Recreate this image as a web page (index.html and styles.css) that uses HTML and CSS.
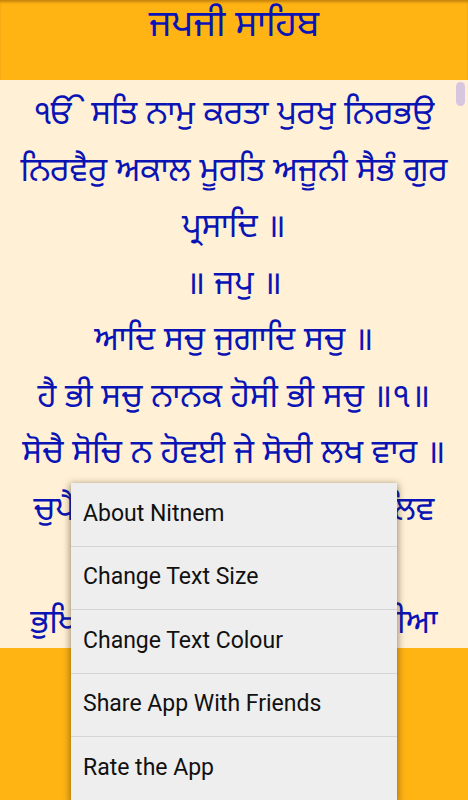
FILE: index.html
```html
<!DOCTYPE html>
<html lang="pa">
<head>
<meta charset="utf-8">
<title>ਜਪਜੀ ਸਾਹਿਬ</title>
<link rel="stylesheet" href="styles.css">
</head>
<body>
<div class="app">
  <header class="topbar">
    <h1 class="title">ਜਪਜੀ ਸਾਹਿਬ</h1>
  </header>
  <main class="reader">
    <div class="scrollthumb"></div>
    <p class="line">ੴ ਸਤਿ ਨਾਮੁ ਕਰਤਾ ਪੁਰਖੁ ਨਿਰਭਉ</p>
    <p class="line">ਨਿਰਵੈਰੁ ਅਕਾਲ ਮੂਰਤਿ ਅਜੂਨੀ ਸੈਭੰ ਗੁਰ</p>
    <p class="line">ਪ੍ਰਸਾਦਿ ॥</p>
    <p class="line">॥ ਜਪੁ ॥</p>
    <p class="line">ਆਦਿ ਸਚੁ ਜੁਗਾਦਿ ਸਚੁ ॥</p>
    <p class="line">ਹੈ ਭੀ ਸਚੁ ਨਾਨਕ ਹੋਸੀ ਭੀ ਸਚੁ ॥੧॥</p>
    <p class="line">ਸੋਚੈ ਸੋਚਿ ਨ ਹੋਵਈ ਜੇ ਸੋਚੀ ਲਖ ਵਾਰ ॥</p>
    <p class="line">ਚੁਪੈ ਚੁਪ ਨ ਹੋਵਈ ਜੇ ਲਾਇ ਰਹਾ ਲਿਵ</p>
    <p class="line">ਤਾਰ ॥</p>
    <p class="line">ਭੁਖਿਆ ਭੁਖ ਨ ਉਤਰੀ ਜੇ ਬੰਨਾ ਪੁਰੀਆ</p>
  </main>
  <footer class="bottombar"></footer>
  <ul class="menu">
    <li class="menu-item">About Nitnem</li>
    <li class="menu-item">Change Text Size</li>
    <li class="menu-item">Change Text Colour</li>
    <li class="menu-item">Share App With Friends</li>
    <li class="menu-item">Rate the App</li>
  </ul>
</div>
</body>
</html>
```
FILE: styles.css
```css
* { box-sizing: border-box; }
html, body { margin: 0; padding: 0; }
body {
  width: 468px;
  height: 800px;
  overflow: hidden;
  font-family: "Noto Sans Gurmukhi", "Lohit Gurmukhi", "Raavi", "Noto Sans", sans-serif;
}
.app {
  position: relative;
  width: 468px;
  height: 800px;
  display: flex;
  flex-direction: column;
  background: #ffb414;
}
.topbar {
  height: 80px;
  flex: none;
  background: #ffb414;
  box-shadow: inset 0 3px 3px -1px rgba(120, 70, 0, 0.45);
  display: flex;
  justify-content: center;
  align-items: flex-start;
}
.title {
  margin: 5px 0 0;
  font-size: 37px;
  font-weight: normal;
  color: #0a14b4;
  line-height: 44px;
}
.reader {
  position: relative;
  height: 568px;
  flex: none;
  background: #fff0d6;
  overflow: hidden;
  padding-top: 8px;
}
.scrollthumb {
  position: absolute;
  right: 3px;
  top: 2px;
  width: 9px;
  height: 24px;
  border-radius: 5px;
  background: #d7c6df;
}
.line {
  margin: 0;
  text-align: center;
  font-size: 33px;
  line-height: 56.5px;
  color: #0a14b4;
  white-space: nowrap;
}
.bottombar {
  flex: 1;
  background: #ffb414;
}
.menu {
  position: absolute;
  left: 71px;
  top: 483px;
  width: 326px;
  margin: 0;
  padding: 0;
  list-style: none;
  background: #eeeeee;
  box-shadow: 0 2px 7px 1px rgba(60, 40, 0, 0.5);
  font-family: Roboto, "Noto Sans", sans-serif;
}
.menu-item {
  height: 63.5px;
  display: flex;
  align-items: center;
  padding: 0 0 2px 12px;
  font-size: 23px;
  color: #111111;
  border-bottom: 1.5px solid #d5d5d5;
}
```
